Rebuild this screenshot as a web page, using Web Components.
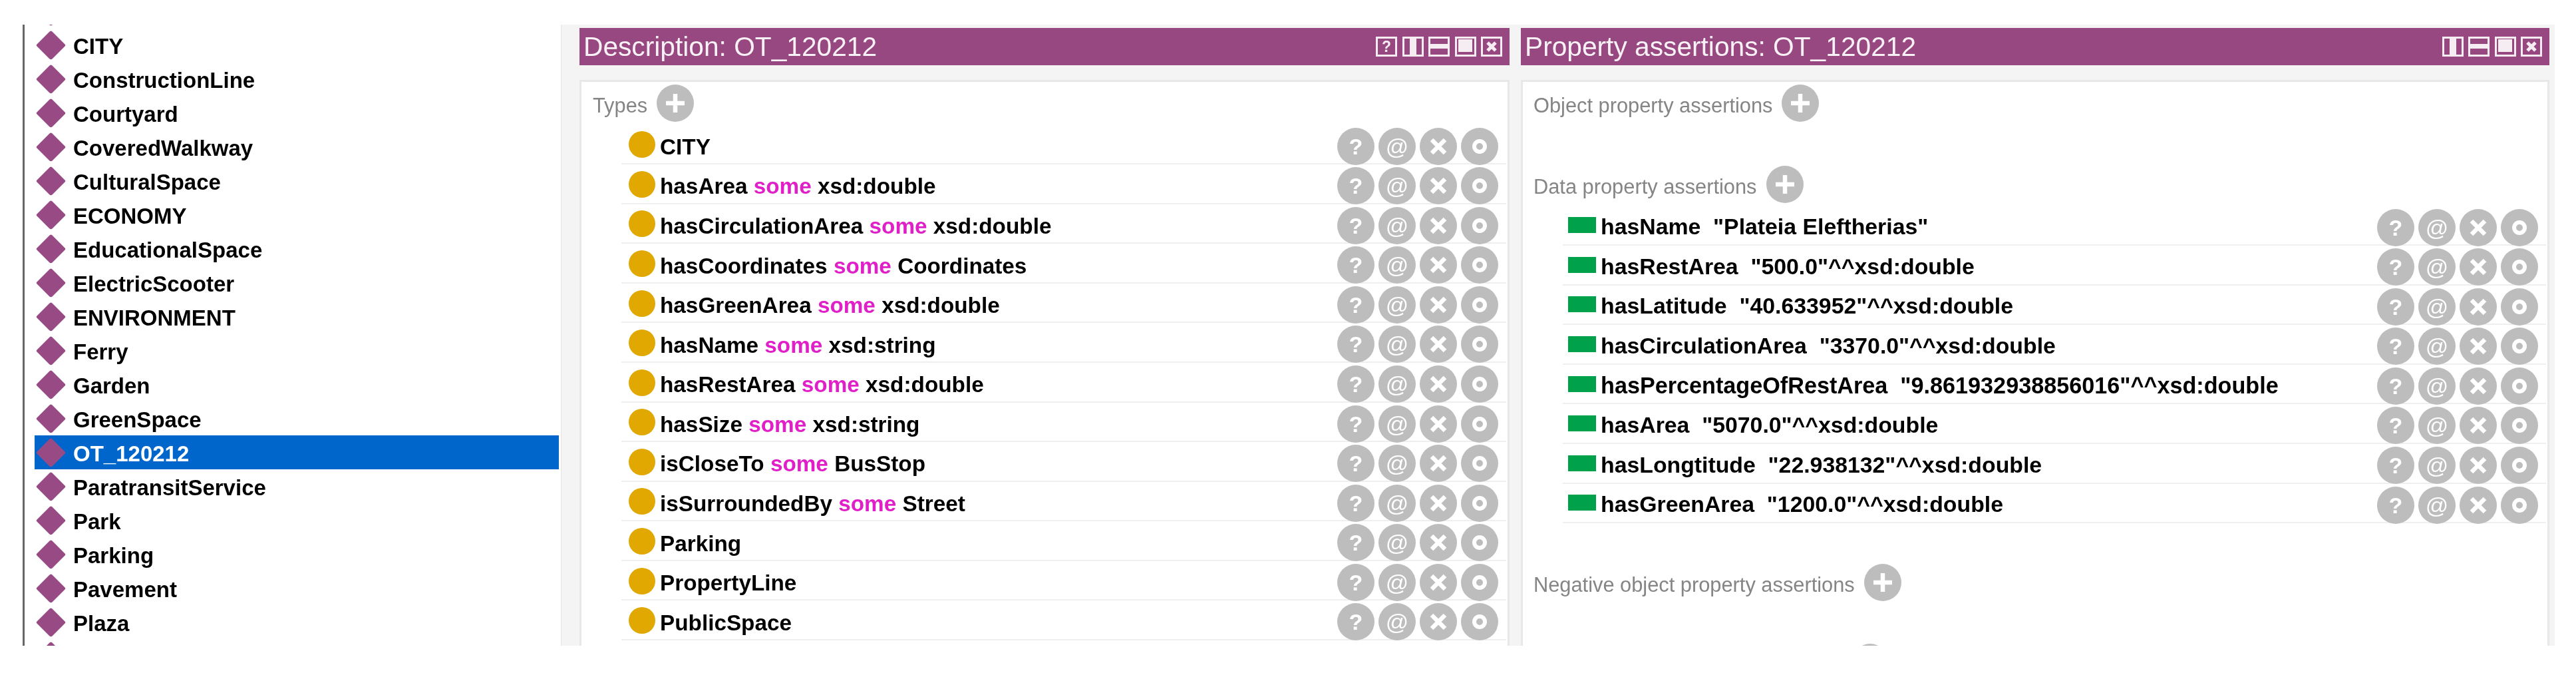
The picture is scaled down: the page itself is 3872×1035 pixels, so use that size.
<!DOCTYPE html>
<html>
<head>
<meta charset="utf-8">
<title>Protege individuals</title>
<style>
  html, body { margin: 0; padding: 0; background: #fff; overflow: hidden; }
  body { font-family: 'Liberation Sans', Arial, sans-serif; }
</style>
</head>
<body>

<owl-app>
  <owl-tree slot="tree">
    <owl-tree-row></owl-tree-row>
    <owl-tree-row>CITY</owl-tree-row>
    <owl-tree-row>ConstructionLine</owl-tree-row>
    <owl-tree-row>Courtyard</owl-tree-row>
    <owl-tree-row>CoveredWalkway</owl-tree-row>
    <owl-tree-row>CulturalSpace</owl-tree-row>
    <owl-tree-row>ECONOMY</owl-tree-row>
    <owl-tree-row>EducationalSpace</owl-tree-row>
    <owl-tree-row>ElectricScooter</owl-tree-row>
    <owl-tree-row>ENVIRONMENT</owl-tree-row>
    <owl-tree-row>Ferry</owl-tree-row>
    <owl-tree-row>Garden</owl-tree-row>
    <owl-tree-row>GreenSpace</owl-tree-row>
    <owl-tree-row selected>OT_120212</owl-tree-row>
    <owl-tree-row>ParatransitService</owl-tree-row>
    <owl-tree-row>Park</owl-tree-row>
    <owl-tree-row>Parking</owl-tree-row>
    <owl-tree-row>Pavement</owl-tree-row>
    <owl-tree-row>Plaza</owl-tree-row>
    <owl-tree-row></owl-tree-row>
  </owl-tree>

  <owl-panel heading="Description: OT_120212" help style="width:1398px">
    <owl-section label="Types" style="--inset:17px">
      <owl-frame-row kind="class">CITY</owl-frame-row>
      <owl-frame-row kind="class">hasArea <em>some</em> xsd:double</owl-frame-row>
      <owl-frame-row kind="class">hasCirculationArea <em>some</em> xsd:double</owl-frame-row>
      <owl-frame-row kind="class">hasCoordinates <em>some</em> Coordinates</owl-frame-row>
      <owl-frame-row kind="class">hasGreenArea <em>some</em> xsd:double</owl-frame-row>
      <owl-frame-row kind="class">hasName <em>some</em> xsd:string</owl-frame-row>
      <owl-frame-row kind="class">hasRestArea <em>some</em> xsd:double</owl-frame-row>
      <owl-frame-row kind="class">hasSize <em>some</em> xsd:string</owl-frame-row>
      <owl-frame-row kind="class">isCloseTo <em>some</em> BusStop</owl-frame-row>
      <owl-frame-row kind="class">isSurroundedBy <em>some</em> Street</owl-frame-row>
      <owl-frame-row kind="class">Parking</owl-frame-row>
      <owl-frame-row kind="class">PropertyLine</owl-frame-row>
      <owl-frame-row kind="class">PublicSpace</owl-frame-row>
    </owl-section>
  </owl-panel>

  <owl-panel heading="Property assertions: OT_120212" style="width:1546px">
    <owl-section label="Object property assertions" style="margin-bottom:66px"></owl-section>
    <owl-section label="Data property assertions" style="margin-bottom:61px">
      <owl-frame-row kind="data">hasName  "Plateia Eleftherias"</owl-frame-row>
      <owl-frame-row kind="data">hasRestArea  "500.0"^^xsd:double</owl-frame-row>
      <owl-frame-row kind="data">hasLatitude  "40.633952"^^xsd:double</owl-frame-row>
      <owl-frame-row kind="data">hasCirculationArea  "3370.0"^^xsd:double</owl-frame-row>
      <owl-frame-row kind="data" style="font-size:34.2px">hasPercentageOfRestArea  "9.861932938856016"^^xsd:double</owl-frame-row>
      <owl-frame-row kind="data">hasArea  "5070.0"^^xsd:double</owl-frame-row>
      <owl-frame-row kind="data">hasLongtitude  "22.938132"^^xsd:double</owl-frame-row>
      <owl-frame-row kind="data">hasGreenArea  "1200.0"^^xsd:double</owl-frame-row>
    </owl-section>
    <owl-section label="Negative object property assertions" style="margin-bottom:64px"></owl-section>
    <owl-section style="--inset:494px"></owl-section>
  </owl-panel>
</owl-app>

<script>
// small helper, every element below has its own open shadow root
function shadow(el, html) {
  el.attachShadow({ mode: 'open' }).innerHTML = html;
}

const BOX = '<rect x="1.5" y="1.5" width="29" height="27" fill="none" stroke="#f6edf3" stroke-width="3"/>';
const VIEW_ICONS = {
  help: `<svg viewBox="0 0 32 30">${BOX}<text x="16" y="23" text-anchor="middle" font-family="Liberation Sans" font-weight="700" font-size="23" fill="#f6edf3">?</text></svg>`,
  split: `<svg viewBox="0 0 32 30">${BOX}<rect x="11" y="2" width="10" height="26" fill="#f6edf3"/></svg>`,
  stack: `<svg viewBox="0 0 32 30">${BOX}<rect x="2" y="11" width="28" height="7" fill="#f6edf3"/></svg>`,
  max: `<svg viewBox="0 0 32 30">${BOX}<rect x="5" y="4" width="21" height="19" fill="#f6edf3"/></svg>`,
  close: `<svg viewBox="0 0 32 30">${BOX}<path d="M10 9l12 12M22 9L10 21" stroke="#f6edf3" stroke-width="5" fill="none"/></svg>`,
};

class OwlApp extends HTMLElement {
  constructor() {
    super();
    shadow(this, `
      <style>
        :host {
          display: flex;
          height: 933px;
          margin: 37px 32px 0 34px;
          overflow: hidden;
          background: #fff;
          filter: blur(0.6px);
        }
        .main {
          flex: 1;
          display: flex;
          gap: 17px;
          padding: 5px 8px 0 27px;
          background: #f4f4f4;
          border-left: 1px solid #e4e4e4;
        }
      </style>
      <slot name="tree"></slot>
      <div class="main"><slot></slot></div>
    `);
  }
}

class OwlTree extends HTMLElement {
  constructor() {
    super();
    shadow(this, `
      <style>
        :host {
          display: block;
          box-sizing: border-box;
          width: 809px;
          flex: none;
          padding: 0 3px 0 15px;
          border-left: 3px solid #666;
          overflow: hidden;
          background: #fff;
        }
        .rows { margin-top: -46px; }
      </style>
      <div class="rows"><slot></slot></div>
    `);
  }
}

class OwlTreeRow extends HTMLElement {
  constructor() {
    super();
    shadow(this, `
      <style>
        :host {
          display: flex;
          align-items: center;
          gap: 11px;
          height: 51px;
          padding-left: 2px;
          font-size: 33px;
          font-weight: 700;
          color: #000;
        }
        :host([selected]) { background: #0066cc; color: #fff; }
        svg { width: 45px; height: 44px; flex: none; }
        .label { padding-top: 5px; white-space: pre; }
      </style>
      <svg viewBox="0 0 45 44"><path d="M22.5 0.5 Q24 0.5 25 2 L43.5 20.5 Q45 22 43.5 23.5 L25 42 Q22.5 44.5 20 42 L1.5 23.5 Q0 22 1.5 20.5 L20 2 Q21 0.5 22.5 0.5Z" fill="#984a84"/></svg>
      <span class="label"><slot></slot></span>
    `);
  }
}

class OwlPanel extends HTMLElement {
  constructor() {
    super();
    const icons = ['split', 'stack', 'max', 'close'];
    if (this.hasAttribute('help')) icons.unshift('help');
    shadow(this, `
      <style>
        :host {
          display: flex;
          flex-direction: column;
          flex: none;
          min-width: 0;
        }
        .title {
          display: flex;
          align-items: center;
          justify-content: space-between;
          height: 56px;
          padding: 0 11px 0 6px;
          background: #974880;
          color: #f8f1f6;
          font-size: 40.7px;
          white-space: nowrap;
        }
        .icons { display: flex; gap: 7.5px; }
        .icons svg { display: block; width: 32px; height: 30px; }
        .body {
          flex: 1;
          margin-top: 22px;
          padding-top: 4px;
          background: #fff;
          border: 3px solid #e8e8e8;
          border-bottom: 0;
          overflow: hidden;
        }
      </style>
      <div class="title">
        <span>${this.getAttribute('heading')}</span>
        <span class="icons">${icons.map((name) => VIEW_ICONS[name]).join('')}</span>
      </div>
      <div class="body"><slot></slot></div>
    `);
  }
}

class OwlSection extends HTMLElement {
  constructor() {
    super();
    const label = this.getAttribute('label') || '';
    shadow(this, `
      <style>
        :host { display: block; --inset: 16px; }
        .head {
          display: flex;
          align-items: center;
          gap: 14px;
          height: 56px;
          padding-left: var(--inset);
          margin-bottom: 4.5px;
          font-size: 30.8px;
          color: #858585;
          white-space: nowrap;
        }
        .label { padding-top: 8px; }
        .label:empty { display: none; }
        svg { width: 56px; height: 56px; flex: none; }
      </style>
      <div class="head">
        <span class="label">${label}</span>
        <svg viewBox="0 0 56 56"><circle cx="28" cy="28" r="28" fill="#bdbdbd"/><path d="M28 14v28M14 28h28" stroke="#fff" stroke-width="6.5"/></svg>
      </div>
      <slot></slot>
    `);
  }
}

class OwlFrameRow extends HTMLElement {
  constructor() {
    super();
    const data = this.getAttribute('kind') === 'data';
    const swatch = data
      ? '<span class="swatch data"></span>'
      : '<span class="swatch class"></span>';
    shadow(this, `
      <style>
        :host {
          display: flex;
          align-items: center;
          box-sizing: border-box;
          height: 59.58px;
          margin: 0 2px 0 60px;
          padding: 0 12px 0 ${data ? 8 : 11}px;
          border-bottom: 2px solid #efefef;
          font-size: ${data ? 33.8 : 33.3}px;
          font-weight: 700;
          color: #000;
        }
        .swatch { flex: none; margin-right: 7px; margin-top: 2px; }
        .class { width: 40px; height: 40px; border-radius: 50%; background: #e0a800; }
        .data { width: 42px; height: 24px; background: #00a14b; margin-top: 0; }
        .text { flex: 1; padding-top: ${data ? 5 : 9}px; white-space: pre; }
        ::slotted(em) { font-style: normal; color: #e01fc8; }
        .actions {
          display: flex;
          gap: 6px;
          align-self: flex-start;
          margin: 4px 0 -4px;
        }
        .btn {
          display: flex;
          align-items: center;
          justify-content: center;
          width: 56px;
          height: 56px;
          border-radius: 50%;
          background: #bdbdbd;
          color: #fff;
          line-height: 1;
        }
        .q { font-size: 34px; font-weight: 700; }
        .at { font-size: 34px; font-weight: 400; }
        .btn svg { width: 56px; height: 56px; }
      </style>
      ${swatch}
      <span class="text"><slot></slot></span>
      <span class="actions">
        <span class="btn q">?</span>
        <span class="btn at">@</span>
        <span class="btn"><svg viewBox="0 0 56 56"><path d="M18 18l20 20M38 18L18 38" stroke="#fff" stroke-width="6.5"/></svg></span>
        <span class="btn"><svg viewBox="0 0 56 56"><circle cx="28" cy="28" r="8" fill="none" stroke="#fff" stroke-width="6"/></svg></span>
      </span>
    `);
  }
}

customElements.define('owl-app', OwlApp);
customElements.define('owl-tree', OwlTree);
customElements.define('owl-tree-row', OwlTreeRow);
customElements.define('owl-panel', OwlPanel);
customElements.define('owl-section', OwlSection);
customElements.define('owl-frame-row', OwlFrameRow);
</script>
</body>
</html>
